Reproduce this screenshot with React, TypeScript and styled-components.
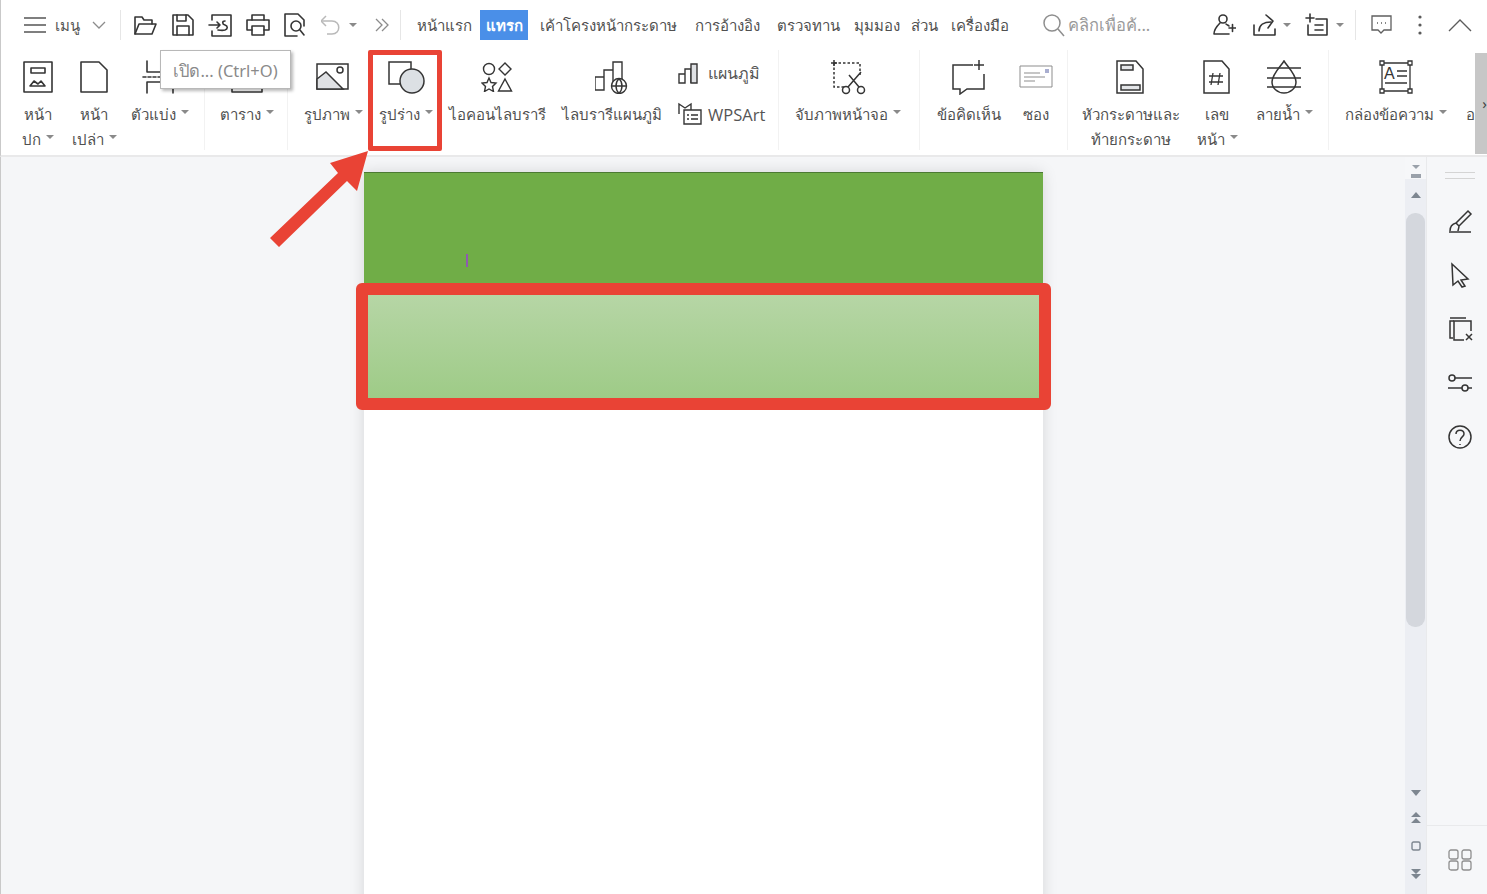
import React from "react";
import styled, { createGlobalStyle } from "styled-components";

const GlobalStyle = createGlobalStyle`
  html, body {
    margin: 0;
    padding: 0;
    background: #fff;
  }
  body {
    font-family: "Noto Sans", "Open Sans", sans-serif;
  }
`;

const INK = "#353535";

type IconProps = { w?: number; h?: number; children: React.ReactNode };

function Glyph({ w = 24, h = 24, children }: IconProps) {
  return (
    <svg
      width={w}
      height={h}
      viewBox={`0 0 ${w} ${h}`}
      fill="none"
      stroke={INK}
      strokeWidth="1.6"
      strokeLinejoin="round"
      strokeLinecap="round"
    >
      {children}
    </svg>
  );
}

const topIcons = {
  folder: (
    <Glyph>
      <path d="M2 21V4h7l2 3h8v4" />
      <path d="M2 21l4-10h17l-4 10z" />
    </Glyph>
  ),
  save: (
    <Glyph>
      <path d="M2 2h15l5 5v15H2z" />
      <path d="M6 2v6h9V2" />
      <path d="M6 22v-9h12v9" />
    </Glyph>
  ),
  importFile: (
    <Glyph>
      <path d="M4 7V2h19v21H4v-5" />
      <path d="M1 12h11M9 9l3 3-3 3" />
      <path d="M17 8c-3 0-3 3 0 4 3 1 3 4 0 5-2 .6-5 .3-7 0" />
    </Glyph>
  ),
  print: (
    <Glyph>
      <path d="M6 7V2h12v5" />
      <path d="M6 17H1V7h22v10h-5" />
      <path d="M6 13h12v9H6z" />
    </Glyph>
  ),
  preview: (
    <Glyph>
      <path d="M14 23H2V1h13l6 6v6" />
      <circle cx="13" cy="13" r="5" />
      <path d="M17 17l4 5" />
    </Glyph>
  ),
  undo: (
    <svg width="22" height="24" viewBox="2 0 22 24" fill="none" stroke="#b9b9b9" strokeWidth="1.5">
      <path d="M7 3L2 8l5 5" />
      <path d="M2 8h11c9 0 9 13 0 13H8" />
    </svg>
  ),
  more: (
    <svg width="14" height="14" viewBox="0 0 14 14" fill="none" stroke="#8c8c8c" strokeWidth="1.3">
      <path d="M1 1l6 6-6 6M7 1l6 6-6 6" />
    </svg>
  ),
  search: (
    <svg width="22" height="24" viewBox="0 0 22 24" fill="none" stroke="#8e8e8e" strokeWidth="1.5">
      <circle cx="9" cy="10" r="8" />
      <path d="M15 16l6 7" />
    </svg>
  ),
  userPlus: (
    <Glyph>
      <circle cx="11" cy="6" r="4" />
      <path d="M8 10c-3 3-6 7-6 11h15" />
      <path d="M14 11c1 1 2 1 3 2" />
      <path d="M17 15h7M20.500 11.500v7" />
    </Glyph>
  ),
  share: (
    <Glyph>
      <path d="M2 12v10h21v-6" />
      <path d="M7 18c0-6 5-9 12-9" />
      <path d="M14 2l7 6-5 7" />
    </Glyph>
  ),
  addNote: (
    <Glyph>
      <path d="M1 5h8M5 1v8" />
      <path d="M11 6h11v16H3V12" />
      <path d="M10 12h8M10 17h8" />
    </Glyph>
  ),
  comment: (
    <svg width="21" height="20" viewBox="0 0 21 20" fill="none" stroke="#5f5f5f" strokeWidth="1.3">
      <path d="M1 1h19v14h-7l-3 3-3-3H1z" />
      <path d="M6 8h1M10 8h1M14 8h1" />
    </svg>
  ),
  dots: (
    <svg width="6" height="22" viewBox="0 0 6 22" fill="#5a5a5a">
      <circle cx="3" cy="3" r="1.600" />
      <circle cx="3" cy="11" r="1.600" />
      <circle cx="3" cy="19" r="1.600" />
    </svg>
  ),
  chevronUp: (
    <svg width="24" height="14" viewBox="0 0 24 14" fill="none" stroke="#5c5c5c" strokeWidth="1.4">
      <path d="M1 13L12 2l11 11" />
    </svg>
  ),
};

const ribbonIcons = {
  cover: (
    <Glyph w={30} h={34}>
      <path d="M1 2h28v30H1z" />
      <path d="M8 8h14v5H8z" />
      <path d="M7 26l4-5 4 3 3-3 4 5z" />
    </Glyph>
  ),
  blank: (
    <Glyph w={30} h={34}>
      <path d="M2 2h18l8 8v22H2z" />
    </Glyph>
  ),
  divider: (
    <Glyph w={36} h={34}>
      <path d="M5 1v11h30" />
      <path d="M1 17h34" strokeDasharray="3 2" />
      <path d="M5 33V22h30M31 22v11" />
    </Glyph>
  ),
  table: (
    <Glyph w={34} h={34}>
      <path d="M2 2h30v30H2z" />
      <path d="M2 28h30" />
    </Glyph>
  ),
  picture: (
    <svg width="34" height="30" viewBox="0 0 34 30" fill="none" stroke={INK} strokeWidth="1.5">
      <path d="M1 2h31v25H1z" />
      <path d="M1 17l9-7 17 17H1z" fill="#dfe1e4" />
      <circle cx="24" cy="8" r="3" />
    </svg>
  ),
  shape: (
    <svg width="38" height="34" viewBox="0 0 38 34" fill="none" stroke={INK} strokeWidth="1.5">
      <path d="M2 2h22v22H2z" />
      <circle cx="25" cy="21" r="12" fill="#dce0e4" />
    </svg>
  ),
  iconLib: (
    <svg width="32" height="30" viewBox="0 0 32 30" fill="none" stroke={INK} strokeWidth="1.4">
      <circle cx="8" cy="7" r="5.500" />
      <path d="M24 1l6 6-6 6-6-6z" />
      <path d="M8 16l2 4.500 5 .5-3.500 3.500 1 5L8 27l-4.500 2.500 1-5L1 21l5-.5z" />
      <path d="M24 17l6.500 12h-13z" />
    </svg>
  ),
  chartLib: (
    <svg width="34" height="34" viewBox="0 0 34 34" fill="none" stroke={INK} strokeWidth="1.4">
      <path d="M0 17h9v13H0zM9 30V10h9v13M18 10V2h9v18" />
      <circle cx="24" cy="26" r="7.500" fill="#fff" />
      <path d="M16.500 26h15M24 18.500c-4 4-4 11 0 15M24 18.500c4 4 4 11 0 15" />
    </svg>
  ),
  chart: (
    <svg width="22" height="22" viewBox="0 0 22 22" fill="none" stroke={INK} strokeWidth="1.4">
      <path d="M1 12h6v9H1zM7 21V7h6v14" />
      <path d="M13 2h6v19h-6z" fill="#dfe1e4" />
    </svg>
  ),
  wpsArt: (
    <svg width="24" height="24" viewBox="0 0 24 24" fill="none" stroke={INK} strokeWidth="1.4">
      <path d="M1 12V2l6 4 6-4v6" />
      <path d="M6 8h17v14H6z" />
      <path d="M9 13h2M13 13h7M9 17h2M13 17h7" />
    </svg>
  ),
  screenshot: (
    <svg width="36" height="36" viewBox="0 0 36 36" fill="none" stroke={INK} strokeWidth="1.5">
      <path d="M4 4h26v12M4 4v24h10" strokeDasharray="2.500 2" />
      <path d="M1 4h6M4 1v6" />
      <circle cx="16" cy="31" r="3.500" />
      <circle cx="31" cy="31" r="3.500" />
      <path d="M18 28L31 13M29 28L19 16" />
    </svg>
  ),
  addComment: (
    <svg width="36" height="36" viewBox="0 0 36 36" fill="none" stroke={INK} strokeWidth="1.5">
      <path d="M22 6H2v24h7v5l7-5h17V15" />
      <path d="M23 6h10M28 1v10" />
    </svg>
  ),
  envelope: (
    <svg width="34" height="26" viewBox="0 0 34 26" fill="none" stroke="#8d8d8d" strokeWidth="1">
      <path d="M1 2h32v21H1z" />
      <path d="M5 9h16M5 13h21M5 17h11" />
      <path d="M26 5h4v4h-4z" fill="#a9aed0" stroke="none" />
    </svg>
  ),
  headerFooter: (
    <svg width="30" height="34" viewBox="0 0 30 34" fill="none" stroke={INK} strokeWidth="1.500">
      <path d="M1 1h19l7 8v24H1z" />
      <path d="M5 5h12v5H5zM5 25h19v5H5z" fill="#e3e5e8" />
    </svg>
  ),
  pageNumber: (
    <svg width="28" height="34" viewBox="0 0 28 34" fill="none" stroke={INK} strokeWidth="1.500">
      <path d="M1 1h18l7 8v24H1z" />
      <path d="M10 13l-2 12M17 13l-2 12M6 16h14M6 22h14" strokeWidth="1.300" />
    </svg>
  ),
  watermark: (
    <svg width="36" height="34" viewBox="0 0 36 34" fill="none" stroke={INK} strokeWidth="1.500">
      <path d="M18 1c-3 5-12 13-12 21a12 11 0 0 0 24 0C30 14 21 6 18 1z" />
      <path d="M1 8h34M1 18h34M1 27h34" />
    </svg>
  ),
  textBox: (
    <svg width="34" height="34" viewBox="0 0 34 34" fill="none" stroke={INK} strokeWidth="1.300">
      <path d="M3 3h28v28H3z" />
      <path d="M1 1h4v4H1zM29 1h4v4h-4zM1 29h4v4H1zM29 29h4v4h-4z" fill="#fff" />
      <text x="5" y="19" fontFamily="Liberation Sans" fontSize="16" fill={INK} stroke="none">A</text>
      <path d="M18 11h10M18 16h10M6 23h22" />
    </svg>
  ),
};

function SideIcon({ children }: { children: React.ReactNode }) {
  return (
    <svg width="26" height="26" viewBox="0 0 26 26" fill="none" stroke={INK} strokeWidth="1.500">
      {children}
    </svg>
  );
}

const tabs = [
  { label: "หน้าแรก", width: 63 },
  { label: "แทรก", width: 48, active: true },
  { label: "เค้าโครงหน้ากระดาษ", width: 155 },
  { label: "การอ้างอิง", width: 82 },
  { label: "ตรวจทาน", width: 77 },
  { label: "มุมมอง", width: 57 },
  { label: "ส่วน", width: 40 },
  { label: "เครื่องมือ", width: 60 },
];

export default function App() {
  return (
    <Root>
      <GlobalStyle />
      <TopBar>
        <MenuToggle>
          <svg width="22" height="16" viewBox="0 0 22 16" stroke="#555" strokeWidth="1.5">
            <path d="M0 1h22M0 8h22M0 15h22" />
          </svg>
          <MenuLabel>เมนู</MenuLabel>
          <svg width="14" height="8" viewBox="0 0 14 8" fill="none" stroke="#8c8c8c" strokeWidth="1.3">
            <path d="M1 1l6 6 6-6" />
          </svg>
        </MenuToggle>
        <TopDivider />
        <QuickTools>
          {topIcons.folder}
          {topIcons.save}
          {topIcons.importFile}
          {topIcons.print}
          {topIcons.preview}
          <UndoSlot>
            {topIcons.undo}
            <Caret />
          </UndoSlot>
          <MoreSlot>{topIcons.more}</MoreSlot>
        </QuickTools>
        <TopDivider />
        <Tabs>
          {tabs.map((tab) => (
            <Tab key={tab.label} $width={tab.width} $active={tab.active}>
              {tab.label}
            </Tab>
          ))}
        </Tabs>
        <Search>
          {topIcons.search}
          <SearchHint>คลิกเพื่อค้...</SearchHint>
        </Search>
        <RightTools>
          <ToolSlot $width={40}>{topIcons.userPlus}</ToolSlot>
          <ToolSlot $width={53}>
            {topIcons.share}
            <Caret />
          </ToolSlot>
          <ToolSlot $width={50}>
            {topIcons.addNote}
            <Caret />
          </ToolSlot>
          <RightDivider />
          <ToolSlot $width={46}>{topIcons.comment}</ToolSlot>
          <ToolSlot $width={31}>{topIcons.dots}</ToolSlot>
          <ToolSlot $width={24}>{topIcons.chevronUp}</ToolSlot>
        </RightTools>
      </TopBar>

      <Ribbon>
        <Group $width={195}>
          <Tool $width={56}>
            <ToolIcon>{ribbonIcons.cover}</ToolIcon>
            <ToolLabel>หน้า<br />ปก<Caret /></ToolLabel>
          </Tool>
          <Tool $width={56}>
            <ToolIcon>{ribbonIcons.blank}</ToolIcon>
            <ToolLabel>หน้า<br />เปล่า<Caret /></ToolLabel>
          </Tool>
          <Tool $width={76}>
            <ToolIcon>{ribbonIcons.divider}</ToolIcon>
            <ToolLabel>ตัวแบ่ง<Caret /></ToolLabel>
          </Tool>
        </Group>
        <Group $width={83}>
          <Tool $width={83}>
            <ToolIcon>{ribbonIcons.table}</ToolIcon>
            <ToolLabel>ตาราง<Caret /></ToolLabel>
          </Tool>
        </Group>
        <Group $width={491}>
          <Tool $width={90}>
            <ToolIcon>{ribbonIcons.picture}</ToolIcon>
            <ToolLabel>รูปภาพ<Caret /></ToolLabel>
          </Tool>
          <Tool $width={56}>
            <ToolIcon>{ribbonIcons.shape}</ToolIcon>
            <ToolLabel>รูปร่าง<Caret /></ToolLabel>
          </Tool>
          <Tool $width={126}>
            <ToolIcon>{ribbonIcons.iconLib}</ToolIcon>
            <ToolLabel>ไอคอนไลบรารี</ToolLabel>
          </Tool>
          <Tool $width={104}>
            <ToolIcon>{ribbonIcons.chartLib}</ToolIcon>
            <ToolLabel>ไลบรารีแผนภูมิ</ToolLabel>
          </Tool>
          <StackedTools>
            <StackedRow>
              {ribbonIcons.chart}
              <SmallLabel>แผนภูมิ</SmallLabel>
            </StackedRow>
            <StackedRow>
              {ribbonIcons.wpsArt}
              <ArtLabel>WPSArt</ArtLabel>
            </StackedRow>
          </StackedTools>
        </Group>
        <Group $width={141}>
          <Tool $width={137}>
            <ToolIcon>{ribbonIcons.screenshot}</ToolIcon>
            <ToolLabel>จับภาพหน้าจอ<Caret /></ToolLabel>
          </Tool>
        </Group>
        <Group $width={148}>
          <Tool $width={98}>
            <ToolIcon>{ribbonIcons.addComment}</ToolIcon>
            <ToolLabel>ข้อคิดเห็น</ToolLabel>
          </Tool>
          <Tool $width={36}>
            <ToolIcon>{ribbonIcons.envelope}</ToolIcon>
            <ToolLabel>ซอง</ToolLabel>
          </Tool>
        </Group>
        <Group $width={261}>
          <Tool $width={126}>
            <ToolIcon>{ribbonIcons.headerFooter}</ToolIcon>
            <ToolLabel>หัวกระดาษและ<br />ท้ายกระดาษ</ToolLabel>
          </Tool>
          <Tool $width={46}>
            <ToolIcon>{ribbonIcons.pageNumber}</ToolIcon>
            <ToolLabel>เลข<br />หน้า<Caret /></ToolLabel>
          </Tool>
          <Tool $width={88}>
            <ToolIcon>{ribbonIcons.watermark}</ToolIcon>
            <ToolLabel>ลายน้ำ<Caret /></ToolLabel>
          </Tool>
        </Group>
        <Tool $width={134}>
          <ToolIcon>{ribbonIcons.textBox}</ToolIcon>
          <ToolLabel>กล่องข้อความ<Caret /></ToolLabel>
        </Tool>
        <TrailingTool>
          <ToolIcon />
          <ToolLabel>อ</ToolLabel>
        </TrailingTool>
        <RibbonScroll>›</RibbonScroll>
      </Ribbon>

      <Workspace>
        <Canvas>
          <Page>
            <HeaderBand />
            <LightBand />
            <TextCursor />
            <Highlight />
          </Page>
        </Canvas>

        <Scrollbar>
          <ScrollTop>
            <svg width="12" height="14" viewBox="0 0 12 14" fill="#9aa1aa">
              <path d="M2 0h8L6 4zM1 9h10v4H1z" />
            </svg>
          </ScrollTop>
          <ScrollArrow $dir="up" />
          <Thumb />
          <ScrollArrow $dir="down" />
          <PageJump>
            <svg width="10" height="12" viewBox="0 0 10 12" fill="#7d8690">
              <path d="M5 0l5 5H0zM5 6l5 5H0z" />
            </svg>
          </PageJump>
          <PageJump>
            <svg width="10" height="10" viewBox="0 0 10 10" fill="none" stroke="#7d8690" strokeWidth="1.400">
              <rect x="1" y="1" width="8" height="8" rx="1.500" />
            </svg>
          </PageJump>
          <PageJump>
            <svg width="10" height="12" viewBox="0 0 10 12" fill="#7d8690">
              <path d="M0 1h10L5 6zM0 6h10l-5 5z" />
            </svg>
          </PageJump>
        </Scrollbar>

        <SidePanel>
          <SideHandle />
          <SideIcons>
            <SideIcon>
              <path d="M2 24h22" />
              <path d="M3 23c0-4 2-7 6-8L21 3l3 3-12 12c0 2-1 4-1 5" />
              <path d="M9 15l3 3" />
            </SideIcon>
            <SideIcon>
              <path d="M5 2l16 15-7 1 4 6-3 1-4-6-5 4z" />
            </SideIcon>
            <SideIcon>
              <path d="M7 5H3v17h3" />
              <path d="M3 2h16" />
              <path d="M24 15V5H7v19h10" />
              <path d="M19 18l6 6M25 18l-6 6" />
            </SideIcon>
            <SideIcon>
              <circle cx="5" cy="8" r="3" />
              <path d="M8 8h17" />
              <circle cx="18" cy="18" r="3" />
              <path d="M1 18h14M21 18h4" />
            </SideIcon>
            <SideIcon>
              <circle cx="13" cy="13" r="11" />
              <path d="M9 10c0-5 8-5 8 0 0 3-4 3-4 7" />
              <path d="M13 20v1" />
            </SideIcon>
          </SideIcons>
          <SideFooter>
            <svg width="24" height="22" viewBox="0 0 24 22" fill="none" stroke="#8f8f8f" strokeWidth="1.300">
              <rect x="1" y="1" width="9" height="9" rx="2" />
              <rect x="14" y="1" width="9" height="9" rx="2" />
              <rect x="1" y="12" width="9" height="9" rx="2" />
              <rect x="14" y="12" width="9" height="9" rx="2" />
            </svg>
          </SideFooter>
        </SidePanel>
      </Workspace>

      <Tooltip>เปิด... (Ctrl+O)</Tooltip>
      <ShapeMarker />
      <Arrow width="110" height="110" viewBox="0 0 110 110">
        <polygon points="2,89 70,24 62,14 100,2 89,42 79,32 11,98" fill="#e94335" />
      </Arrow>
    </Root>
  );
}

const Root = styled.div`
  position: relative;
  display: flex;
  flex-direction: column;
  width: 1487px;
  height: 894px;
  overflow: hidden;
  background: #f5f6f8;
  color: #4a4a4a;
  font-size: 15px;
`;

const TopBar = styled.div`
  display: flex;
  align-items: center;
  height: 50px;
  flex: none;
  padding-left: 23px;
  background: #fff;
  border-left: 1px solid #c9c9c9;
  box-sizing: border-box;
`;

const MenuToggle = styled.div`
  display: flex;
  align-items: center;
  width: 96px;
`;

const MenuLabel = styled.span`
  margin: 2px 12px 0 9px;
  font-size: 15px;
  color: #555;
`;

const TopDivider = styled.div`
  width: 1px;
  height: 30px;
  background: #e6e6e6;
`;

const RightDivider = styled(TopDivider)`
  margin-right: 15px;
`;

const QuickTools = styled.div`
  display: flex;
  align-items: center;
  gap: 13.500px;
  width: 279px;
  padding-left: 12px;
  box-sizing: border-box;
`;

const UndoSlot = styled.div`
  display: flex;
  align-items: center;
  gap: 1px;
`;

const MoreSlot = styled.div`
  display: flex;
  margin-left: 5px;
`;

const Tabs = styled.div`
  display: flex;
  align-items: center;
  padding-left: 16px;
  height: 30px;
`;

const Tab = styled.div<{ $width: number; $active?: boolean }>`
  width: ${(p) => p.$width}px;
  height: 30px;
  line-height: 30px;
  flex: none;
  white-space: nowrap;
  font-size: 15px;
  color: ${(p) => (p.$active ? "#fff" : "#505050")};
  font-weight: ${(p) => (p.$active ? 700 : 400)};
  background: ${(p) => (p.$active ? "#4a8fe8" : "transparent")};
  text-align: ${(p) => (p.$active ? "center" : "left")};
  margin-right: ${(p) => (p.$active ? "12px" : "0")};
`;

const Search = styled.div`
  display: flex;
  align-items: center;
  gap: 3px;
  margin-left: 32px;
  width: 148px;
  flex: none;
`;

const SearchHint = styled.span`
  font-size: 16.500px;
  color: #9a9a9a;
  white-space: nowrap;
`;

const RightTools = styled.div`
  display: flex;
  align-items: center;
  margin-left: 21px;
`;

const ToolSlot = styled.div<{ $width: number }>`
  display: flex;
  align-items: center;
  gap: 2px;
  flex: none;
  width: ${(p) => p.$width}px;
`;

const Caret = styled.span`
  display: inline-block;
  width: 0;
  height: 0;
  margin-left: 5px;
  vertical-align: 6px;
  border-left: 4px solid transparent;
  border-right: 4px solid transparent;
  border-top: 4px solid #8a8a8a;
`;

const Ribbon = styled.div`
  position: relative;
  display: flex;
  flex: none;
  height: 107px;
  padding-left: 9px;
  box-sizing: border-box;
  background: #fff;
  border-left: 1px solid #c9c9c9;
  border-bottom: 2px solid #e9e9ea;
`;

const Group = styled.div<{ $width: number }>`
  display: flex;
  flex: none;
  width: ${(p) => p.$width}px;
  height: 100px;
  box-sizing: border-box;
  border-right: 1px solid #f2f2f2;
`;

const Tool = styled.div<{ $width: number }>`
  display: flex;
  flex-direction: column;
  align-items: center;
  flex: none;
  width: ${(p) => p.$width}px;
`;

const TrailingTool = styled.div`
  display: flex;
  flex-direction: column;
  flex: none;
  width: 12px;
  padding-left: 2px;
  box-sizing: border-box;
`;

const ToolIcon = styled.div`
  display: flex;
  align-items: center;
  justify-content: center;
  flex: none;
  height: 36px;
  margin-top: 9px;
  margin-bottom: 7px;
`;

const ToolLabel = styled.div`
  font-size: 15px;
  line-height: 25px;
  white-space: nowrap;
  text-align: center;
  color: #505050;
`;

const StackedTools = styled.div`
  display: flex;
  flex-direction: column;
  gap: 17px;
  padding: 11px 0 0 14px;
`;

const StackedRow = styled.div`
  display: flex;
  align-items: center;
  gap: 8px;
  height: 24px;
`;

const SmallLabel = styled.span`
  font-size: 16px;
  color: #555;
`;

const ArtLabel = styled.span`
  margin-left: -2px;
  font-family: "Open Sans", "Liberation Sans", sans-serif;
  font-size: 16.500px;
  color: #555;
`;

const RibbonScroll = styled.div`
  flex: none;
  width: 13px;
  height: 101px;
  margin-top: 3px;
  background: #c7c7c7;
  color: #444;
  font-size: 15px;
  line-height: 100px;
  text-align: right;
  padding-right: 1px;
  box-sizing: border-box;
`;

const Workspace = styled.div`
  display: flex;
  flex: 1;
  min-height: 0;
  border-left: 1px solid #c9c9c9;
`;

const Canvas = styled.div`
  flex: 1;
  min-width: 0;
  display: flex;
  justify-content: center;
  padding-top: 15px;
  background: #f5f6f8;
`;

const Page = styled.div`
  position: relative;
  width: 679px;
  height: 800px;
  flex: none;
  background: #fff;
  box-shadow: 0 0 14px rgba(0, 0, 0, 0.13);
`;

const HeaderBand = styled.div`
  height: 110px;
  background: #70ad47;
  border-top: 1px solid #4c7a33;
`;

const LightBand = styled.div`
  height: 115px;
  background: linear-gradient(180deg, #b9d7a9 0%, #9ecb87 100%);
`;

const TextCursor = styled.div`
  position: absolute;
  left: 102px;
  top: 82px;
  width: 2px;
  height: 13px;
  background: #8e5bb0;
`;

const Highlight = styled.div`
  position: absolute;
  left: -8px;
  top: 111px;
  width: 695px;
  height: 127px;
  box-sizing: border-box;
  border: 12px solid #e94335;
  border-radius: 6px;
`;

const Scrollbar = styled.div`
  display: flex;
  flex-direction: column;
  align-items: center;
  flex: none;
  width: 21px;
  background: #eceef3;
`;

const ScrollTop = styled.div`
  display: flex;
  justify-content: center;
  width: 100%;
  height: 27px;
  padding-top: 8px;
  box-sizing: border-box;
  background: #f6f7f9;
`;

const ScrollArrow = styled.div<{ $dir: "up" | "down" }>`
  flex: none;
  width: 0;
  height: 0;
  margin: ${(p) => (p.$dir === "up" ? "13px 0 15px" : "163px 0 16px")};
  border-left: 5px solid transparent;
  border-right: 5px solid transparent;
  border-top: ${(p) => (p.$dir === "down" ? "6px solid #7d8690" : "none")};
  border-bottom: ${(p) => (p.$dir === "up" ? "6px solid #7d8690" : "none")};
`;

const Thumb = styled.div`
  flex: none;
  width: 19px;
  height: 414px;
  border-radius: 9px;
  background: #d4d7dd;
`;

const PageJump = styled.div`
  display: flex;
  align-items: center;
  justify-content: center;
  flex: none;
  height: 12px;
  margin-bottom: 16px;
`;

const SidePanel = styled.div`
  display: flex;
  flex-direction: column;
  align-items: center;
  flex: none;
  width: 60px;
  border-left: 1px solid #e9eaec;
  background: #f6f7f9;
`;

const SideHandle = styled.div`
  flex: none;
  width: 30px;
  height: 5px;
  margin: 15px 0 0 5px;
  border-top: 1px solid #d4d4d4;
  border-bottom: 1px solid #d4d4d4;
`;

const SideIcons = styled.div`
  display: flex;
  flex-direction: column;
  gap: 28px;
  margin: 29px 0 0 5px;
`;

const SideFooter = styled.div`
  display: flex;
  justify-content: center;
  align-items: center;
  width: 100%;
  height: 69px;
  margin-top: auto;
  padding-left: 5px;
  box-sizing: border-box;
  border-top: 1px solid #e9eaec;
`;

const Tooltip = styled.div`
  position: absolute;
  left: 160px;
  top: 50px;
  width: 131px;
  height: 39px;
  line-height: 39px;
  text-align: center;
  box-sizing: border-box;
  background: #fff;
  border: 1px solid #b8b8b8;
  box-shadow: 2px 2px 3px rgba(0, 0, 0, 0.28);
  font-size: 16.500px;
  color: #8a8a8a;
`;

const ShapeMarker = styled.div`
  position: absolute;
  left: 368px;
  top: 50px;
  width: 74px;
  height: 101px;
  box-sizing: border-box;
  border: 5px solid #e94335;
  border-radius: 2px;
`;

const Arrow = styled.svg`
  position: absolute;
  left: 268px;
  top: 149px;
`;
